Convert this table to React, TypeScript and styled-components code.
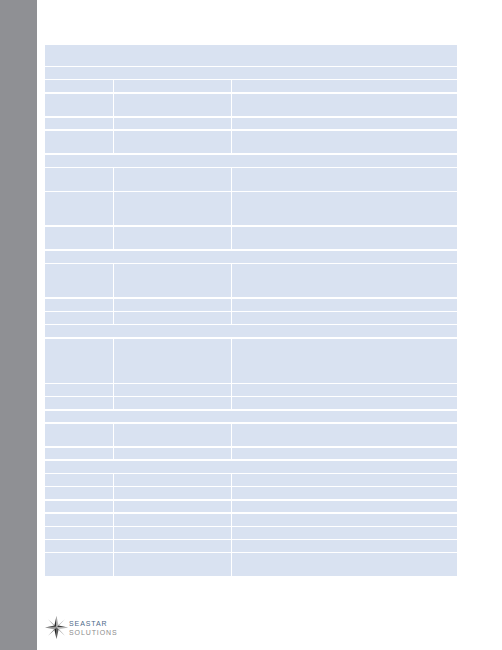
import React from "react";
import styled, { createGlobalStyle } from "styled-components";

const Global = createGlobalStyle`
  html, body { margin: 0; padding: 0; background: #ffffff; overflow: hidden; }
  body { font-family: "Liberation Sans", Arial, sans-serif; }
`;

const Page = styled.div`
  display: flex;
  width: 502px;
  height: 650px;
`;

const Sidebar = styled.div`
  width: 37px;
  flex: 0 0 37px;
  background: #8f9094;
`;

const Main = styled.div`
  flex: 1;
  display: flex;
  flex-direction: column;
  padding: 45px 0 0 8px;
`;

const Table = styled.div`
  width: 412px;
  display: grid;
  row-gap: 1.5px;
  background: #ffffff;
`;

const Row = styled.div<{ $span?: boolean }>`
  display: grid;
  grid-template-columns: ${(p) => (p.$span ? "1fr" : "68.3px 117px 1fr")};
  column-gap: 1px;
`;

const Cell = styled.div`
  background: #d9e2f1;
`;

const Footer = styled.div`
  display: flex;
  align-items: center;
  gap: 1px;
  margin-top: 40px;
  margin-left: 0px;
`;

const LogoText = styled.div`
  display: flex;
  flex-direction: column;
  gap: 1.5px;
  margin-top: 1px;
  font-family: "Liberation Sans", Arial, sans-serif;
  font-size: 7px;
  line-height: 7px;
  letter-spacing: 0.9px;
`;

const Brand = styled.span<{ $tone: "blue" | "gray" }>`
  color: ${(p) => (p.$tone === "blue" ? "#4d6a8a" : "#8c8c8c")};
`;

type R = { span?: boolean; n: number; h?: number };

const rows: R[] = [
  { span: true, n: 2, h: 20.7 },
  { span: true, n: 1 },
  { n: 1 },
  { n: 2 },
  { n: 1 },
  { n: 2 },
  { span: true, n: 1 },
  { n: 2 },
  { n: 3 },
  { n: 2 },
  { span: true, n: 1 },
  { n: 3 },
  { n: 1 },
  { n: 1 },
  { span: true, n: 1 },
  { n: 4 },
  { n: 1 },
  { n: 1 },
  { span: true, n: 1 },
  { n: 2 },
  { n: 1 },
  { span: true, n: 1 },
  { n: 1 },
  { n: 1 },
  { n: 1 },
  { n: 1 },
  { n: 1 },
  { n: 1 },
  { n: 2 },
];

const Star = () => (
  <svg width="23" height="23" viewBox="0 0 22 22">
    <defs>
      <linearGradient id="g1" x1="0" y1="0" x2="1" y2="1">
        <stop offset="0" stopColor="#1a1a1a" />
        <stop offset="1" stopColor="#6a6a6a" />
      </linearGradient>
    </defs>
    <polygon points="11,11 3,3 9.5,10" fill="#333" />
    <polygon points="11,11 3,3 10,9.5" fill="#9a9a9a" />
    <polygon points="11,11 19,3 12,9.5" fill="#555" />
    <polygon points="11,11 19,3 12.5,10" fill="#bbb" />
    <polygon points="11,11 19,19 12.5,12" fill="#444" />
    <polygon points="11,11 19,19 12,12.5" fill="#aaa" />
    <polygon points="11,11 3,19 9.5,12" fill="#777" />
    <polygon points="11,11 3,19 10,12.5" fill="#222" />
    <polygon points="11,0 11,11 9,9" fill="#2a2a2a" />
    <polygon points="11,0 11,11 13,9" fill="#b5b5b5" />
    <polygon points="22,11 11,11 13,9" fill="#3a3a3a" />
    <polygon points="22,11 11,11 13,13" fill="#c8c8c8" />
    <polygon points="11,22 11,11 13,13" fill="#555" />
    <polygon points="11,22 11,11 9,13" fill="#1e1e1e" />
    <polygon points="0,11 11,11 9,13" fill="#a0a0a0" />
    <polygon points="0,11 11,11 9,9" fill="url(#g1)" />
  </svg>
);

export default function App() {
  const L = 10.78;
  const P = 0.95;
  return (
    <>
      <Global />
      <Page>
        <Sidebar />
        <Main>
          <Table>
            {rows.map((r, i) => {
              const h = r.h ?? r.n * L + P;
              return (
                <Row key={i} $span={r.span} style={{ height: `${h}px` }}>
                  {r.span ? (
                    <Cell />
                  ) : (
                    <>
                      <Cell />
                      <Cell />
                      <Cell />
                    </>
                  )}
                </Row>
              );
            })}
          </Table>
          <Footer>
            <Star />
            <LogoText>
              <Brand $tone="blue">SEASTAR</Brand>
              <Brand $tone="gray">SOLUTIONS</Brand>
            </LogoText>
          </Footer>
        </Main>
      </Page>
    </>
  );
}
